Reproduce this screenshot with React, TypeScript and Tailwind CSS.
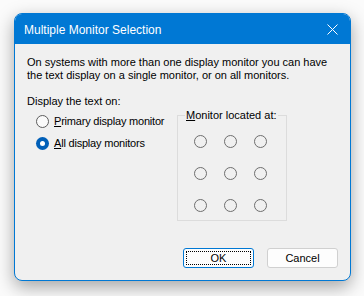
import React from "react";

const font = { fontFamily: '"Liberation Sans", Arial, sans-serif' };

function Radio({ checked }: { checked?: boolean }) {
  if (checked) {
    return (
      <span className="flex h-[13px] w-[13px] shrink-0 items-center justify-center rounded-full bg-[#005fb8]">
        <span className="h-[5px] w-[5px] rounded-full bg-white" />
      </span>
    );
  }
  return <span className="h-[13px] w-[13px] shrink-0 rounded-full border border-[#5c5c5c] bg-[#fafafa]" />;
}

function Dot() {
  return <span className="h-[13px] w-[13px] rounded-full border border-[#6e6e6e]" />;
}

export default function App() {
  return (
    <div className="h-[296px] w-[364px] bg-[#fbfbfb] pl-[14px] pt-[13px]" style={font}>
      <div className="flex h-[268px] w-[337px] flex-col overflow-hidden rounded-lg border border-[#0078d4] bg-[#f0f0f0] shadow-[0_6px_18px_rgba(0,0,0,0.35)]">
        {/* Title bar */}
        <div className="flex h-[30px] shrink-0 items-center justify-between bg-[#0078d4] pl-[9px] pr-[10px] text-white">
          <span className="pt-[1px] text-[12px] leading-none">Multiple Monitor Selection</span>
          <svg width="11" height="11" viewBox="0 0 11 11" className="mr-[2px]">
            <path d="M0.5 0.5 L10.5 10.5 M10.5 0.5 L0.5 10.5" stroke="white" strokeWidth="1" />
          </svg>
        </div>

        {/* Body */}
        <div className="flex flex-1 flex-col px-[12px] pt-[12px] text-[11px] leading-[13px] text-black">
          <p>
            On systems with more than one display monitor you can have
            <br />
            the text display on a single monitor, or on all monitors.
          </p>
          <p className="mt-[13px]">Display the text on:</p>

          <div className="flex">
            <div className="flex w-[150px] shrink-0 flex-col gap-[9px] pl-[9px] pt-[7px]">
              <label className="flex items-center gap-[5px] whitespace-nowrap">
                <Radio />
                <span className="tracking-[-0.2px]">
                  <u>P</u>rimary display monitor
                </span>
              </label>
              <label className="flex items-center gap-[5px] whitespace-nowrap">
                <Radio checked />
                <span className="tracking-[-0.2px]">
                  <u>A</u>ll display monitors
                </span>
              </label>
            </div>

            {/* Group box */}
            <div className="relative mt-[7px] h-[106px] w-[110px] shrink-0 border border-[#dcdcdc] pl-[16px] pt-[19px]">
              <span className="absolute -top-[7px] left-[7px] whitespace-nowrap bg-[#f0f0f0] px-[1px] leading-[13px]">
                <u>M</u>onitor located at:
              </span>
              <div className="grid grid-cols-[13px_13px_13px] gap-x-[17px] gap-y-[19px]">
                {Array.from({ length: 9 }).map((_, i) => (
                  <Dot key={i} />
                ))}
              </div>
            </div>
          </div>

          {/* Buttons */}
          <div className="mt-auto mb-[12px] flex justify-end gap-[13px]">
            <button className="flex h-[20px] w-[71px] items-center justify-center rounded-[3px] border border-[#0078d4] bg-[#fdfdfd] p-[2px]">
              <span className="flex h-full w-full items-center justify-center border border-dotted border-black">
                OK
              </span>
            </button>
            <button className="h-[20px] w-[71px] rounded-[3px] border border-[#d0d0d0] bg-[#fdfdfd]">
              Cancel
            </button>
          </div>
        </div>
      </div>
    </div>
  );
}
